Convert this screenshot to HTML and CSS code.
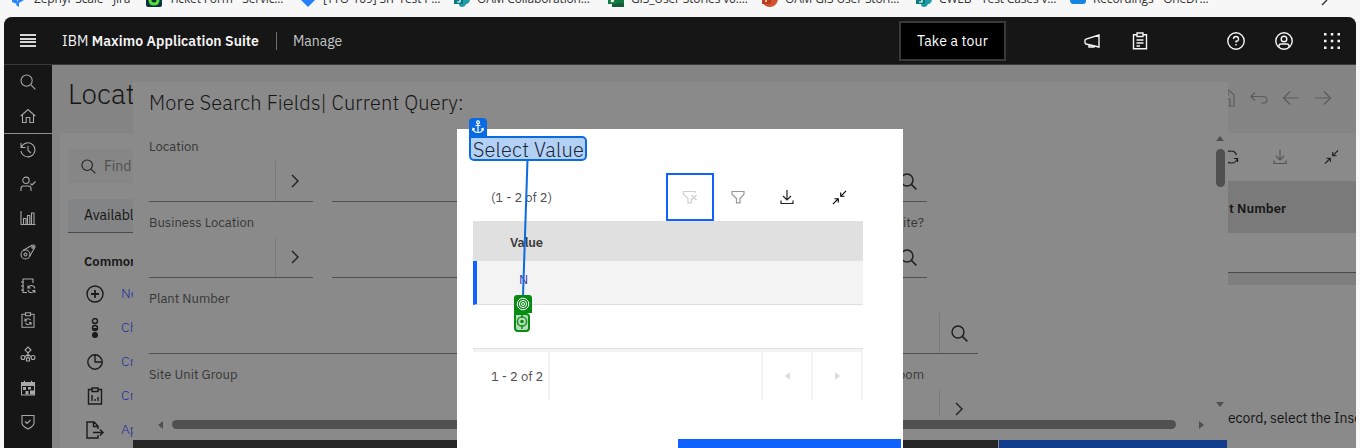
FILE: index.html
```html
<!DOCTYPE html>
<html lang="en">
<head>
<meta charset="utf-8">
<title>Manage</title>
<link rel="stylesheet" href="styles.css">
</head>
<body>
<svg class="defs" aria-hidden="true">
  <symbol id="search" viewBox="0 0 16 16"><circle cx="6.6" cy="6.6" r="5.6"/><path d="M10.7 10.7 15.4 15.4"/></symbol>
  <symbol id="chev" viewBox="0 0 16 16"><path d="m5 2 6 6-6 6"/></symbol>
  <symbol id="filter" viewBox="0 0 16 16"><path d="M2 2.500h12v2.700L10 9.500v4.300H6.500V9.500L2 5.200z"/></symbol>
  <symbol id="down" viewBox="0 0 16 16"><path d="M8 1v10M4 7l4 4 4-4M2 11.500V14.500h12v-3"/></symbol>
  <symbol id="collapse" viewBox="0 0 16 16"><path d="M15 1 9.500 6.500M9.300 2.700v4h4M1 15l5.500-5.500M2.700 9.300h4v4"/></symbol>
</svg>

<nav class="bookmarks">
  <div class="mark first"><svg viewBox="0 0 16 7"><path d="M1 0h5v4L1 2zM7 0h6l-5 3v4L5 5z" fill="#2684ff"/></svg><span>Zephyr Scale - Jira</span></div>
  <div class="mark"><svg viewBox="0 0 16 7"><path d="M0 0h16v5q0 2-2 2H2Q0 7 0 5z" fill="#073340"/><path d="M4 0q0 4 4 4t4-4" fill="none" stroke="#57dd35" stroke-width="3"/></svg><span>Ticket Form - Servic...</span></div>
  <div class="mark"><svg viewBox="0 0 16 7"><path d="M1 0h14L8 7z" fill="#267fff"/></svg><span>[TTO-109] SIT Test P...</span></div>
  <div class="mark"><svg viewBox="0 0 16 7"><path d="M5 0h11q-1 4-4 4-1 3-4 3-3 0-3-3z" fill="#1e9ba5"/><path d="M0 0h9v4H0z" fill="#087c83"/><path d="M3 2h3V0" stroke="#fff" fill="none"/></svg><span>OAM Collaboration...</span></div>
  <div class="mark"><svg viewBox="0 0 16 7"><path d="M4 0h12v7H4z" fill="#185c37"/><path d="M8 0h8v3H8z" fill="#107c41"/><path d="M0 0h9v4H0z" fill="#107c41"/><path d="m3 2 3-2m0 2L3 0" stroke="#fff"/></svg><span>GIS_User Stories v0....</span></div>
  <div class="mark"><svg viewBox="0 0 16 7"><path d="M1 0h15q-2 7-8 7Q3 7 1 3z" fill="#d35230"/><path d="M0 0h9v4H0z" fill="#b83b1d"/><path d="M4 2V0" stroke="#fff"/></svg><span>OAM GIS User Stori...</span></div>
  <div class="mark"><svg viewBox="0 0 16 7"><path d="M5 0h11q-1 4-4 4-1 3-4 3-3 0-3-3z" fill="#1e9ba5"/><path d="M0 0h9v4H0z" fill="#087c83"/><path d="M3 2h3V0" stroke="#fff" fill="none"/></svg><span>CWEB - Test Cases v...</span></div>
  <div class="mark"><svg viewBox="0 0 16 7"><path d="M0 0h16v1q0 3-3 3H3Q0 4 0 0" fill="#1684e2"/></svg><span>Recordings - OneDr...</span></div>
  <svg class="more" viewBox="0 0 8 7"><path d="M7 0 2 5" fill="none" stroke="#333" stroke-width="1.400"/></svg>
</nav>

<div class="app">
  <header class="top">
    <div class="menu"><i></i><i></i><i></i><i></i></div>
    <div class="brand">IBM <b>Maximo Application Suite</b></div>
    <div class="product">Manage</div>
    <button class="tour"><span>Take a tour</span></button>
    <div class="actions">
      <svg class="ic" viewBox="0 0 18 18"><path d="M16 3v12L3 12l-1-1V8l1-1zM6 12.500V15h5v-1.500"/></svg>
      <svg class="ic" viewBox="0 0 18 18"><path d="M6 2.700H2.500v14h13v-14H12M6 1h6v3.500H6zM5.500 8h7M5.500 11h7M5.500 14H9"/></svg>
      <svg class="ic help" viewBox="0 0 18 18"><circle cx="9" cy="9" r="8.200"/><path d="M6.500 7q0-2.500 2.500-2.500T11.500 7 9 9.200V10.500M9 12v1.600"/></svg>
      <svg class="ic" viewBox="0 0 18 18"><circle cx="9" cy="9" r="8.200"/><circle cx="9" cy="7" r="2.800"/><path d="M4 15.500v-1.500q0-2 2-2h6q2 0 2 2v1.500"/></svg>
      <svg class="ic dots" viewBox="0 0 18 18"><path d="M1 1h2.500v2.500H1zM7.800 1h2.500v2.500H7.800zM14.500 1H17v2.500h-2.500zM1 7.800h2.500v2.500H1zM7.800 7.800h2.500v2.500H7.800zM14.500 7.800H17v2.500h-2.500zM1 14.500h2.500V17H1zM7.800 14.500h2.500V17H7.800zM14.500 14.500H17V17h-2.500z"/></svg>
    </div>
  </header>

  <div class="body">
    <aside class="rail">
      <div><svg><use href="#search"/></svg></div>
      <div class="home"><svg viewBox="0 0 16 16"><path d="M.8 8 8 1.500 15.200 8M2.500 7v7.500h3.700V9.500h3.600v5h3.700V7"/></svg></div>
      <div><svg viewBox="0 0 16 16"><path d="M1 1v4.500h4.500M1.500 5A7 7 0 1 1 1 9M8 4v4.500l3 2.500"/></svg></div>
      <div><svg viewBox="0 0 16 16"><circle cx="6" cy="4.300" r="3.200"/><path d="M1 15v-2.500q0-2.500 2.500-2.500h5q2.500 0 2.500 2.500V15M10.500 7.500l1.500 1.500 3.500-3.500"/></svg></div>
      <div><svg viewBox="0 0 16 16"><path d="M1 1v13.500h14.500M3.500 14V8.500H6V14M7.500 14V5.500h2.300V14M11.500 14V3H14v11"/></svg></div>
      <div><svg viewBox="0 0 16 16"><circle cx="5.500" cy="10.500" r="4.500"/><circle cx="5.500" cy="10.500" r="1.500"/><path d="M3 6.500 12 1.200q3-.8 3 2L9.500 12.500"/><circle cx="12.800" cy="3.300" r="1"/></svg></div>
      <div><svg viewBox="0 0 16 16"><path d="M13 5V1H3v13.500h4M1 4h3M1 8h3M1 12h3M8 7.500V10h2.500M8.300 9.500q2-3 5-1.500 1.500 1 1.500 2.500M14.800 15v-2.500h-2.500M14.500 12.800q-2 2.800-5 1.500-1.500-1-1.500-2.500"/></svg></div>
      <div><svg viewBox="0 0 16 16"><path d="M5 2.200H2v13h12v-13h-3M5.500.8h5v3h-5zM5 6.500v2.500h2M5.200 8.700q2.500-3.500 5.500-.5M11 13v-2.500H9M10.800 10.700q-2.500 3.500-5.500.5"/></svg></div>
      <div><svg viewBox="0 0 16 16"><path d="m8 1 3 3-3 3-3-3zM8 7v5M8 8.500l-4 2.500M8 8.500l4 2.500"/><circle cx="3" cy="11.500" r="2"/><circle cx="13" cy="11.500" r="2"/><path d="M6.500 12h3v3h-3z"/></svg></div>
      <div><svg viewBox="0 0 16 16"><path d="M1.500 2.500h13v12.500h-13zM1.500 5.500h13M4.500.8v3M11.500.8v3"/><path class="fill" d="M2 3h12v2.500H2zM3 7h3v3H3zM8 7h3v2.500H8zM5.500 11h3v3.500h-3zM10 10.500h4v4h-4z"/></svg></div>
      <div><svg viewBox="0 0 16 16"><path d="M2 1.500h12V9q0 3-6 6-6-3-6-6zM5 7.500l2 2 3.500-3.500"/></svg></div>
    </aside>

    <main class="page">
      <div class="titlebar">
        <h1>Locat</h1>
        <div class="pagetools">
          <svg viewBox="0 0 18 18"><path d="M1.500 1.500h10l4.500 4.500v11H1.500zM4 1.500v5h6v-5M5 17v-7h7v7"/></svg>
          <svg viewBox="0 0 18 18"><path d="M5 3.500 1 7.500l4 4M1 7.500h12.500q3.500 0 3.500 3.300T13 14h-2"/></svg>
          <svg viewBox="0 0 18 18"><path d="M17 9H1.500M8 2.500 1.500 9 8 15.500"/></svg>
          <svg viewBox="0 0 18 18"><path d="M1 9h15.500M10 2.500 16.500 9 10 15.500"/></svg>
        </div>
      </div>
      <div class="columns">
        <section class="side">
          <div class="find"><svg><use href="#search"/></svg><span>Find</span></div>
          <div class="queries"><span>Availabl</span></div>
          <h2>Common</h2>
          <ul>
            <li><svg viewBox="0 0 18 18"><circle cx="9" cy="9" r="8"/><path d="M9 5v8M5 9h8" stroke-width="1.800"/></svg><a>Ne</a></li>
            <li><svg class="tall" viewBox="0 0 18 20"><circle cx="9" cy="3" r="2.500"/><circle cx="9" cy="10" r="2.500"/><path class="fill" d="M6.500 10h5a2.500 2.500 0 0 1-5 0"/><circle class="fill" cx="9" cy="17" r="3"/></svg><a>Ch</a></li>
            <li><svg viewBox="0 0 18 18"><circle cx="9" cy="9" r="7.200"/><path d="M9 2v7h7"/></svg><a>Cr</a></li>
            <li><svg viewBox="0 0 18 18"><path d="M6 2.500H2.500v14.500h13V2.500H12M6 1h6v3.500H6zM6 8v6M9 12v2M12 10v4"/></svg><a>Cr</a></li>
            <li><svg viewBox="0 0 18 18"><path d="M12 14v3H1V1h7l4 4v3M7.500 1v4.500H12M7 11.500h10M14 8.500l3 3-3 3"/></svg><a>Ap</a></li>
          </ul>
        </section>
        <section class="record">
          <div class="gridtools">
            <svg viewBox="0 0 16 16"><path d="M1.500 7q1-5 6-5t6 4M14.500 9q-1 5-6 5-4 0-6-3M14.500 13V9.500H11M2 4h3"/></svg>
            <svg class="dim"><use href="#down"/></svg>
            <svg><use href="#collapse"/></svg>
          </div>
          <div class="gridhead"><span>t Number</span></div>
          <div class="gridrow"></div>
          <div class="gridfoot"></div>
          <p><span>ecord, select the Inse</span></p>
        </section>
      </div>
    </main>
  </div>
</div>

<section class="dialog">
  <h3><span>More Search Fields| Current Query:</span></h3>
  <div class="scroller">
    <div class="fields">
      <div class="row">
        <div class="field small"><label>Location</label><div class="input"><span><svg><use href="#chev"/></svg></span></div></div>
        <div class="field wide"><label></label><div class="input"><span><svg class="big"><use href="#search"/></svg></span></div></div>
      </div>
      <div class="row">
        <div class="field small"><label>Business Location</label><div class="input"><span><svg><use href="#chev"/></svg></span></div></div>
        <div class="field wide partial"><label class="right">ite?</label><div class="input"><span><svg class="big"><use href="#search"/></svg></span></div></div>
      </div>
      <div class="row">
        <div class="field full"><label>Plant Number</label><div class="input"><span><svg class="big"><use href="#search"/></svg></span></div></div>
      </div>
      <div class="row">
        <div class="field full"><div class="pair"><label>Site Unit Group</label><label class="room">oom</label></div><div class="input"><span><svg><use href="#chev"/></svg></span></div></div>
      </div>
    </div>
    <div class="vbar"><i class="up"></i><b></b><i class="dn"></i></div>
  </div>
  <div class="hbar"><i class="lf"></i><b></b><i class="rt"></i></div>
  <footer><div></div><div></div></footer>
</section>

<section class="modal">
  <div class="heading"><span>Select Value</span></div>
  <div class="tools">
    <span class="count">(1 - 2 of 2)</span>
    <div class="tool focus"><svg viewBox="0 0 16 16"><path d="M13 4V2.500H1.500v2.700L6 9.500v4.300h3.300V9.500M9.500 6l5 5m0-5-5 5"/></svg></div>
    <div class="tool t2"><svg><use href="#filter"/></svg></div>
    <div class="tool t3"><svg><use href="#down"/></svg></div>
    <div class="tool t4"><svg><use href="#collapse"/></svg></div>
  </div>
  <div class="thead"><span>Value</span></div>
  <div class="trow active"><span>N</span></div>
  <div class="trow"></div>
  <div class="pager"><div class="range"><span>1 - 2 of 2</span></div><div class="pg"><i class="lf"></i></div><div class="pg"><i class="rt"></i></div></div>
  <div class="buttons"><div></div></div>
</section>

<svg class="link" viewBox="0 0 12 136"><path d="M8.500 0 4 136"/></svg>
<div class="anchor"><svg viewBox="0 0 14 14"><circle cx="7" cy="2.300" r="1.400"/><path d="M7 3.800V12.500M4.500 5.500h5M2 8.500q.5 4 5 4t5-4M1.500 10.500 2 8.300l2 1M12.500 10.500 12 8.300l-2 1"/></svg></div>
<div class="target"><svg viewBox="0 0 14 14"><circle cx="7" cy="7" r="5.800"/><circle cx="7" cy="7" r="3.600"/><circle cx="7" cy="7" r="1.500"/></svg></div>
<div class="spot"><svg viewBox="0 0 12 14"><circle cx="6" cy="6.500" r="4.600"/><circle class="core" cx="6" cy="6.500" r="1.800"/><path d="M6 0v3M6 10v4"/></svg></div>
</body>
</html>
```
FILE: styles.css
```css
* { box-sizing: border-box; }
body { margin: 0; width: 1360px; height: 448px; overflow: hidden; background: #f7f7f7; font-family: "IBM Plex Sans", Roboto, sans-serif; font-size: 14px; color: #161616; }
svg { display: block; flex: none; fill: none; stroke: currentColor; stroke-width: 1.2; }
.fill { fill: currentColor; stroke: none; }
.defs { position: absolute; width: 0; height: 0; }
h1, h2, h3, p, ul { margin: 0; padding: 0; font-weight: 400; list-style: none; }
span, a, label { white-space: nowrap; }

.bookmarks { display: flex; height: 17px; padding-left: 11px; overflow: hidden; font: 12px "Open Sans", sans-serif; letter-spacing: -0.15px; color: #333; }
.mark { display: flex; gap: 7px; width: 154px; flex: none; }
.mark.first { width: 135px; }
.mark svg { width: 16px; height: 7px; stroke: none; }
.mark span { line-height: 16px; height: 16px; margin-top: -9px; }
.more { width: 8px; height: 7px; margin-left: 96px; }

.app { margin: 0 4px; width: 1352px; height: 431px; border-radius: 8px 8px 0 0; overflow: hidden; background: #848484; }
.top { display: flex; align-items: center; height: 48px; background: #161616; border-bottom: 1px solid #393939; color: #f4f4f4; }
.menu { display: flex; flex-direction: column; gap: 1.4px; width: 16px; margin-left: 16px; }
.menu i { height: 2px; background: #d8d8d8; }
.brand { width: 214px; margin-left: 26px; white-space: nowrap; letter-spacing: 0.07px; }
.brand b { font-weight: 600; }
.product { width: 622px; height: 18px; line-height: 18px; border-left: 1px solid #6f6f6f; padding-left: 16px; color: #c6c6c6; }
.tour { width: 107px; height: 40px; padding: 0; background: #000; border: 2px solid #393939; color: #fff; font: inherit; letter-spacing: 0.15px; margin-left: 1px; }
.actions { display: flex; margin-left: 77px; gap: 30px; }
.ic { width: 18px; height: 18px; stroke-width: 1.4; }
.help { margin-left: 48px; }
.dots { fill: currentColor; stroke: none; }

.body { display: flex; height: 383px; }
.rail { width: 48px; background: #161616; color: #a8a8a8; flex: none; }
.rail div { display: flex; align-items: center; justify-content: center; height: 34px; }
.rail .home { height: 35px; padding-bottom: 1px; border-bottom: 1px solid #8d8d8d; margin-bottom: -1px; }
.rail svg { width: 16px; height: 16px; stroke-width: 1.1; }
.page { flex: 1; min-width: 0; }
.titlebar { display: flex; justify-content: space-between; align-items: center; height: 68px; padding: 0 24px 0 16px; }
h1 { font-size: 28px; font-weight: 300; margin-top: -12px; }
.pagetools { display: flex; gap: 14px; color: #5c5c5c; margin-top: -2px; }
.pagetools svg { width: 18px; height: 18px; stroke-width: 1.2; }
.columns { display: flex; height: 315px; padding-left: 8px; }
.side { width: 1168px; background: #8a8a8a; padding: 16px 0 0 8px; flex: none; }
.find { display: flex; align-items: center; gap: 8px; width: 80px; height: 34px; padding-left: 13px; background: #868686; color: #505050; }
.find svg { width: 15px; height: 15px; color: #222; }
.queries { width: 80px; height: 34px; margin-top: 16px; padding-left: 16px; line-height: 32px; background: #838485; border-bottom: 1px solid #4a4a4a; }
h2 { font-size: 13px; font-weight: 600; padding-left: 16px; margin-top: 20px; line-height: 18px; }
.side ul { margin-top: 6px; }
.side li { display: flex; align-items: center; height: 34px; padding-left: 18px; gap: 17px; }
.side li svg { width: 18px; height: 18px; stroke-width: 1.4; color: #1b1b1b; }
.side li svg.tall { height: 20px; }
.side li a { color: #1e339b; font-weight: 300; padding-bottom: 2px; }
.record { flex: 1; background: #8a8a8a; min-width: 0; overflow: hidden; }
.gridtools { display: flex; align-items: center; gap: 34px; height: 48px; color: #1b1b1b; }
.gridtools svg { width: 16px; height: 16px; margin-left: -5px; }
.gridtools svg:nth-child(2) { margin-left: -1px; }
.gridtools svg:nth-child(3) { margin-left: 2px; width: 15px; }
.gridtools .dim { color: #555; }
.gridhead { height: 52px; padding: 4px 0 0 1px; background: #7a7a7a; line-height: 48px; font-size: 13px; letter-spacing: 0.08px; font-weight: 600; }
.gridrow { height: 40px; border-bottom: 1px solid #4a4a4a; }
.gridfoot { height: 12px; background: #7e7e7e; }
.record p { height: 160px; padding-top: 124px; line-height: 18px; overflow: hidden; letter-spacing: -0.1px; }

.dialog { position: absolute; left: 133px; top: 82px; width: 1095px; height: 366px; background: #8a8a8a; overflow: hidden; }
h3 { height: 47px; padding: 9px 0 0 16px; font-size: 20px; font-weight: 300; line-height: 24px; letter-spacing: 0.17px; color: #161616; }
.scroller { display: flex; justify-content: space-between; height: 287px; overflow: hidden; }
.fields { padding: 8px 0 0 16px; }
.row { display: flex; gap: 19px; height: 76px; }
.field label { display: block; height: 19px; line-height: 19px; font-size: 13px; color: #383838; }
.input { display: flex; justify-content: flex-end; height: 46px; padding-top: 5px; border-bottom: 1px solid #505050; }
.input span { display: flex; align-items: center; width: 39px; border-left: 1px solid #7b7b7b; padding-left: 11px; color: #202020; }
.small .input span { width: 38px; }
.input svg { width: 16px; height: 16px; stroke-width: 1.4; }
.input svg.big { width: 17px; height: 17px; }
.small { width: 164px; }
.wide { width: 595px; }
.full { width: 829px; }
.right { text-align: right; padding-right: 3px; }
.pair { display: flex; justify-content: space-between; }
.room { padding-right: 54px; }
.vbar { display: flex; flex-direction: column; align-items: center; width: 16px; padding: 7px 0 9px; }
.vbar b { width: 9px; height: 38px; border-radius: 5px; background: #505050; margin-top: 8px; }
.vbar i, .hbar i, .pg i { width: 0; height: 0; border: 4px solid transparent; }
.vbar .up { border-bottom: 5px solid #505050; border-top: 0; }
.vbar .dn { border-top: 5px solid #505050; border-bottom: 0; margin-top: auto; }
.hbar { display: flex; align-items: center; height: 24px; padding: 0 21px 7px 25px; }
.hbar b { width: 1004px; height: 9px; border-radius: 5px; background: #505050; margin: 0 23px 0 9px; }
.hbar .lf { border-right: 5px solid #505050; border-left: 0; }
.hbar .rt { border-left: 5px solid #505050; border-right: 0; }
footer { display: flex; gap: 1px; height: 8px; }
footer div { width: 865px; background: #262626; }
footer div + div { width: 228px; background: #123c8c; }

.modal { position: absolute; left: 457px; top: 129px; width: 446px; height: 319px; padding: 7px 0 0 16px; background: #fff; }
.heading { width: 118px; height: 25px; margin-left: -4px; border: 2px solid #0a6ae1; border-radius: 0 5px 5px 5px; background: #b3d1f5; padding-left: 2px; font-size: 20px; font-weight: 300; line-height: 24px; letter-spacing: 0.17px; color: #19253a; }
.tools { display: flex; align-items: center; width: 390px; height: 48px; margin-top: 12px; padding-left: 18px; }
.count { width: 175px; font-size: 13px; color: #525252; }
.tool { display: flex; align-items: center; justify-content: center; width: 48px; height: 48px; }
.tool svg { width: 16px; height: 16px; }
.focus { border: 2px solid #0f62fe; color: #cfcfcf; }
.t2 { color: #999; }
.t3 { color: #222; margin-left: 1px; }
.t4 { margin-left: 4px; color: #000; }
.tool.t4 svg { width: 15px; height: 15px; }
.thead { width: 390px; height: 40px; padding: 2px 0 0 37px; background: #e0e0e0; line-height: 40px; font-size: 13px; letter-spacing: -0.2px; font-weight: 600; color: #393939; }
.trow { width: 390px; height: 44px; border-bottom: 1px solid #e0e0e0; }
.active { background: #f3f3f3; border-left: 4px solid #0f62fe; padding-left: 42px; line-height: 37px; font-size: 13px; color: #4b35a7; }
.pager { display: flex; width: 390px; height: 51px; border-top: 3px solid #f3f3f3; }
.range { width: 77px; padding-left: 18px; border-right: 2px solid #f3f3f3; line-height: 49px; font-size: 13px; color: #525252; margin-right: 211px; }
.pg { display: flex; align-items: center; justify-content: center; width: 50px; border-left: 2px solid #f3f3f3; }
.pg:last-child { width: 52px; border-right: 2px solid #f3f3f3; }
.pg .lf { border-right: 5px solid #dcdcdc; border-left: 0; }
.pg .rt { border-left: 5px solid #dcdcdc; border-right: 0; }
.buttons { display: flex; justify-content: flex-end; padding-right: 2px; margin-top: 39px; height: 9px; }
.buttons div { width: 223px; background: #0f62fe; }

/* Annotation markers over the modal */
.link { position: absolute; left: 519px; top: 160px; width: 12px; height: 136px; stroke: #0a6ae1; stroke-width: 2; }
.anchor { position: absolute; left: 469px; top: 118px; width: 18px; height: 19px; padding: 2px; border-radius: 4px 4px 0 0; background: #0a6ae1; color: #fff; }
.anchor svg { width: 14px; height: 14px; }
.target { position: absolute; left: 514px; top: 295px; width: 18px; height: 18px; padding: 2px; border-radius: 3px 3px 0 0; background: #078b12; color: #fff; }
.target svg { width: 14px; height: 14px; stroke-width: 1; }
.spot { position: absolute; left: 514px; top: 313px; width: 16px; height: 19px; border: 2px solid #078b12; border-radius: 0 4px 4px 4px; background: #b5dcb8; color: #078b12; }
.spot svg { width: 12px; height: 14px; stroke-width: 1.4; }
.spot .core { fill: #078b12; stroke: none; }
```
